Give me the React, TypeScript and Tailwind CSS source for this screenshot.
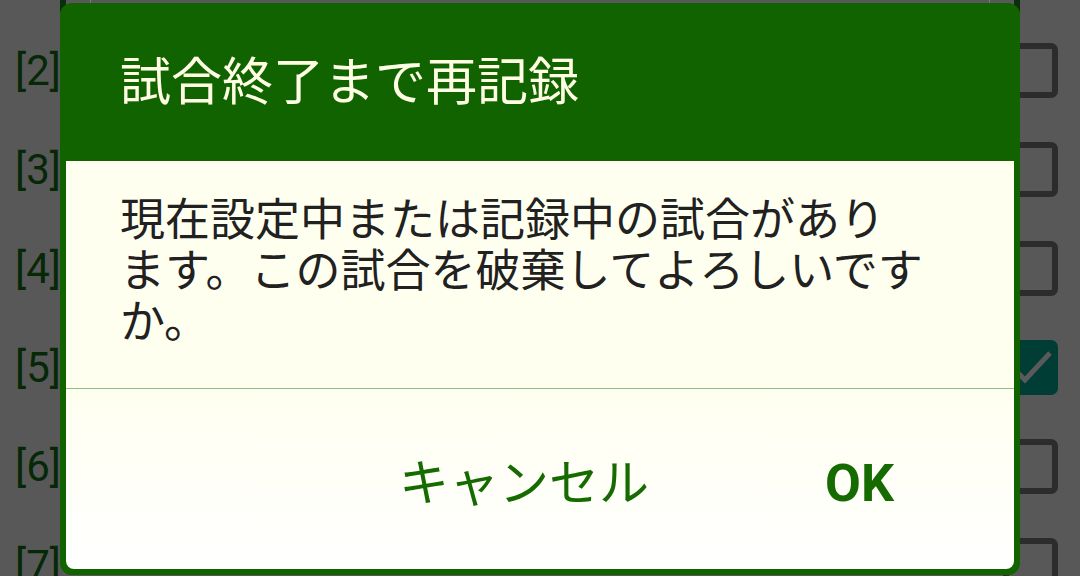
import React from "react";

const rows = [
  { label: "[2]", checked: false },
  { label: "[3]", checked: false },
  { label: "[4]", checked: false },
  { label: "[5]", checked: true },
  { label: "[6]", checked: false },
  { label: "[7]", checked: false },
];

const Checkbox = ({ checked }: { checked: boolean }) =>
  checked ? (
    <div className="w-[55px] h-[55px] rounded-[7px] bg-[#003d35] flex items-center justify-center">
      <svg width="55" height="55" viewBox="0 0 55 55">
        <path d="M9 27 L22 40 L47 13" fill="none" stroke="#5a5a5a" strokeWidth="5" />
      </svg>
    </div>
  ) : (
    <div className="w-[55px] h-[55px] rounded-[7px] border-[6px] border-[#2c2c2c]" />
  );

export default function App() {
  return (
    <div
      className="relative w-[1080px] h-[576px] overflow-hidden bg-[#585858]"
      style={{ fontFamily: "Roboto, 'Noto Sans CJK JP', sans-serif" }}>
      {/* list behind the dialog */}
      <div className="flex flex-col pt-[21px]">
        {rows.map((row) => (
          <div
            key={row.label}
            className="h-[99px] flex items-center justify-between pl-[15px] pr-[22px]">
            <span className="text-[42px] text-[#062806] leading-none">{row.label}</span>
            <Checkbox checked={row.checked} />
          </div>
        ))}
      </div>
      <div className="absolute top-0 left-[60px] w-[960px] h-[12px] border-x-[6px] border-[#0b2f0b]" />
      <div className="absolute top-0 left-[90px] w-[900px] h-[4px] border-x border-b border-[#7a7a7a]" />

      {/* dialog */}
      <div className="absolute left-[60px] top-[3px] w-[960px] h-[572px] rounded-[12px] bg-[#116300] flex flex-col">
        <div className="h-[158px] shrink-0 flex items-center pl-[60px]">
          <h1 className="text-[51px] text-[#fffde4] leading-none font-normal">
            試合終了まで再記録
          </h1>
        </div>
        <div className="flex-1 mx-[6px] mb-[6px] rounded-b-[8px] overflow-hidden flex flex-col">
          <div className="h-[227px] shrink-0 bg-[#fffff0] pl-[54px] pt-[34px]">
            <p className="text-[45px] leading-[51px] text-[#212121]">
              現在設定中または記録中の試合があり
              <br />
              ます。この試合を破棄してよろしいです
              <br />
              か。
            </p>
          </div>
          <div className="h-px shrink-0 bg-[#8fc28a]" />
          <div className="flex-1 bg-linear-to-b from-[#fffff0] to-white flex items-center justify-end pt-[10px] pr-[120px] gap-[176px]">
            <button className="text-[50px] text-[#156a00] leading-none">キャンセル</button>
            <button className="text-[52px] font-bold text-[#156a00] leading-none">OK</button>
          </div>
        </div>
      </div>
    </div>
  );
}
